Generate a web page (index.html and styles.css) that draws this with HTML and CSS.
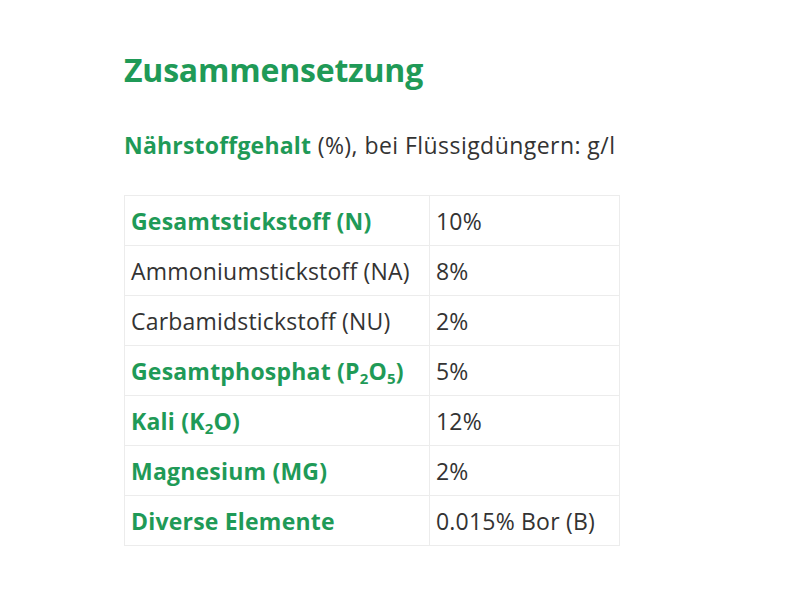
FILE: index.html
```html
<!DOCTYPE html>
<html lang="de">
<head>
<meta charset="utf-8">
<link rel="stylesheet" href="styles.css">
</head>
<body>
<main class="content">
  <h1 class="title">Zusammensetzung</h1>
  <p class="lead"><strong class="green">Nährstoffgehalt</strong> (%), bei Flüssigdüngern: g/l</p>
  <table class="nutrients">
    <tr><th>Gesamtstickstoff (N)</th><td>10%</td></tr>
    <tr><td>Ammoniumstickstoff (NA)</td><td>8%</td></tr>
    <tr><td>Carbamidstickstoff (NU)</td><td>2%</td></tr>
    <tr><th>Gesamtphosphat (P<sub>2</sub>O<sub>5</sub>)</th><td>5%</td></tr>
    <tr><th>Kali (K<sub>2</sub>O)</th><td>12%</td></tr>
    <tr><th>Magnesium (MG)</th><td>2%</td></tr>
    <tr><th>Diverse Elemente</th><td>0.015% Bor (B)</td></tr>
  </table>
</main>
</body>
</html>
```

FILE: styles.css
```css
html, body {
  margin: 0;
  padding: 0;
  background: #ffffff;
}
body {
  font-family: "Open Sans", "Noto Sans", sans-serif;
  color: #333333;
}
.content {
  padding: 50px 0 0 124px;
}
.title {
  margin: 0;
  font-size: 32px;
  line-height: 40px;
  font-weight: 700;
  color: #1f9a57;
  letter-spacing: -0.2px;
}
.lead {
  margin: 40px 0 0;
  font-size: 23px;
  line-height: 30px;
  letter-spacing: 0.45px;
}
.green {
  color: #1f9a57;
  font-weight: 700;
  letter-spacing: 0.2px;
}
.nutrients {
  margin-top: 35px;
  border-collapse: collapse;
  width: 496px;
  font-size: 23px;
}
.nutrients th, .nutrients td {
  border: 1px solid #ececec;
  height: 49px;
  padding: 0 6px;
  text-align: left;
  vertical-align: middle;
}
.nutrients td {
  letter-spacing: 0.2px;
}
.nutrients th {
  color: #1f9a57;
  font-weight: 700;
  letter-spacing: 0.2px;
  width: 292px;
}
.nutrients td:first-child {
  width: 292px;
}
.nutrients sub {
  font-size: 15px;
  vertical-align: -4px;
  line-height: 0;
}
```
